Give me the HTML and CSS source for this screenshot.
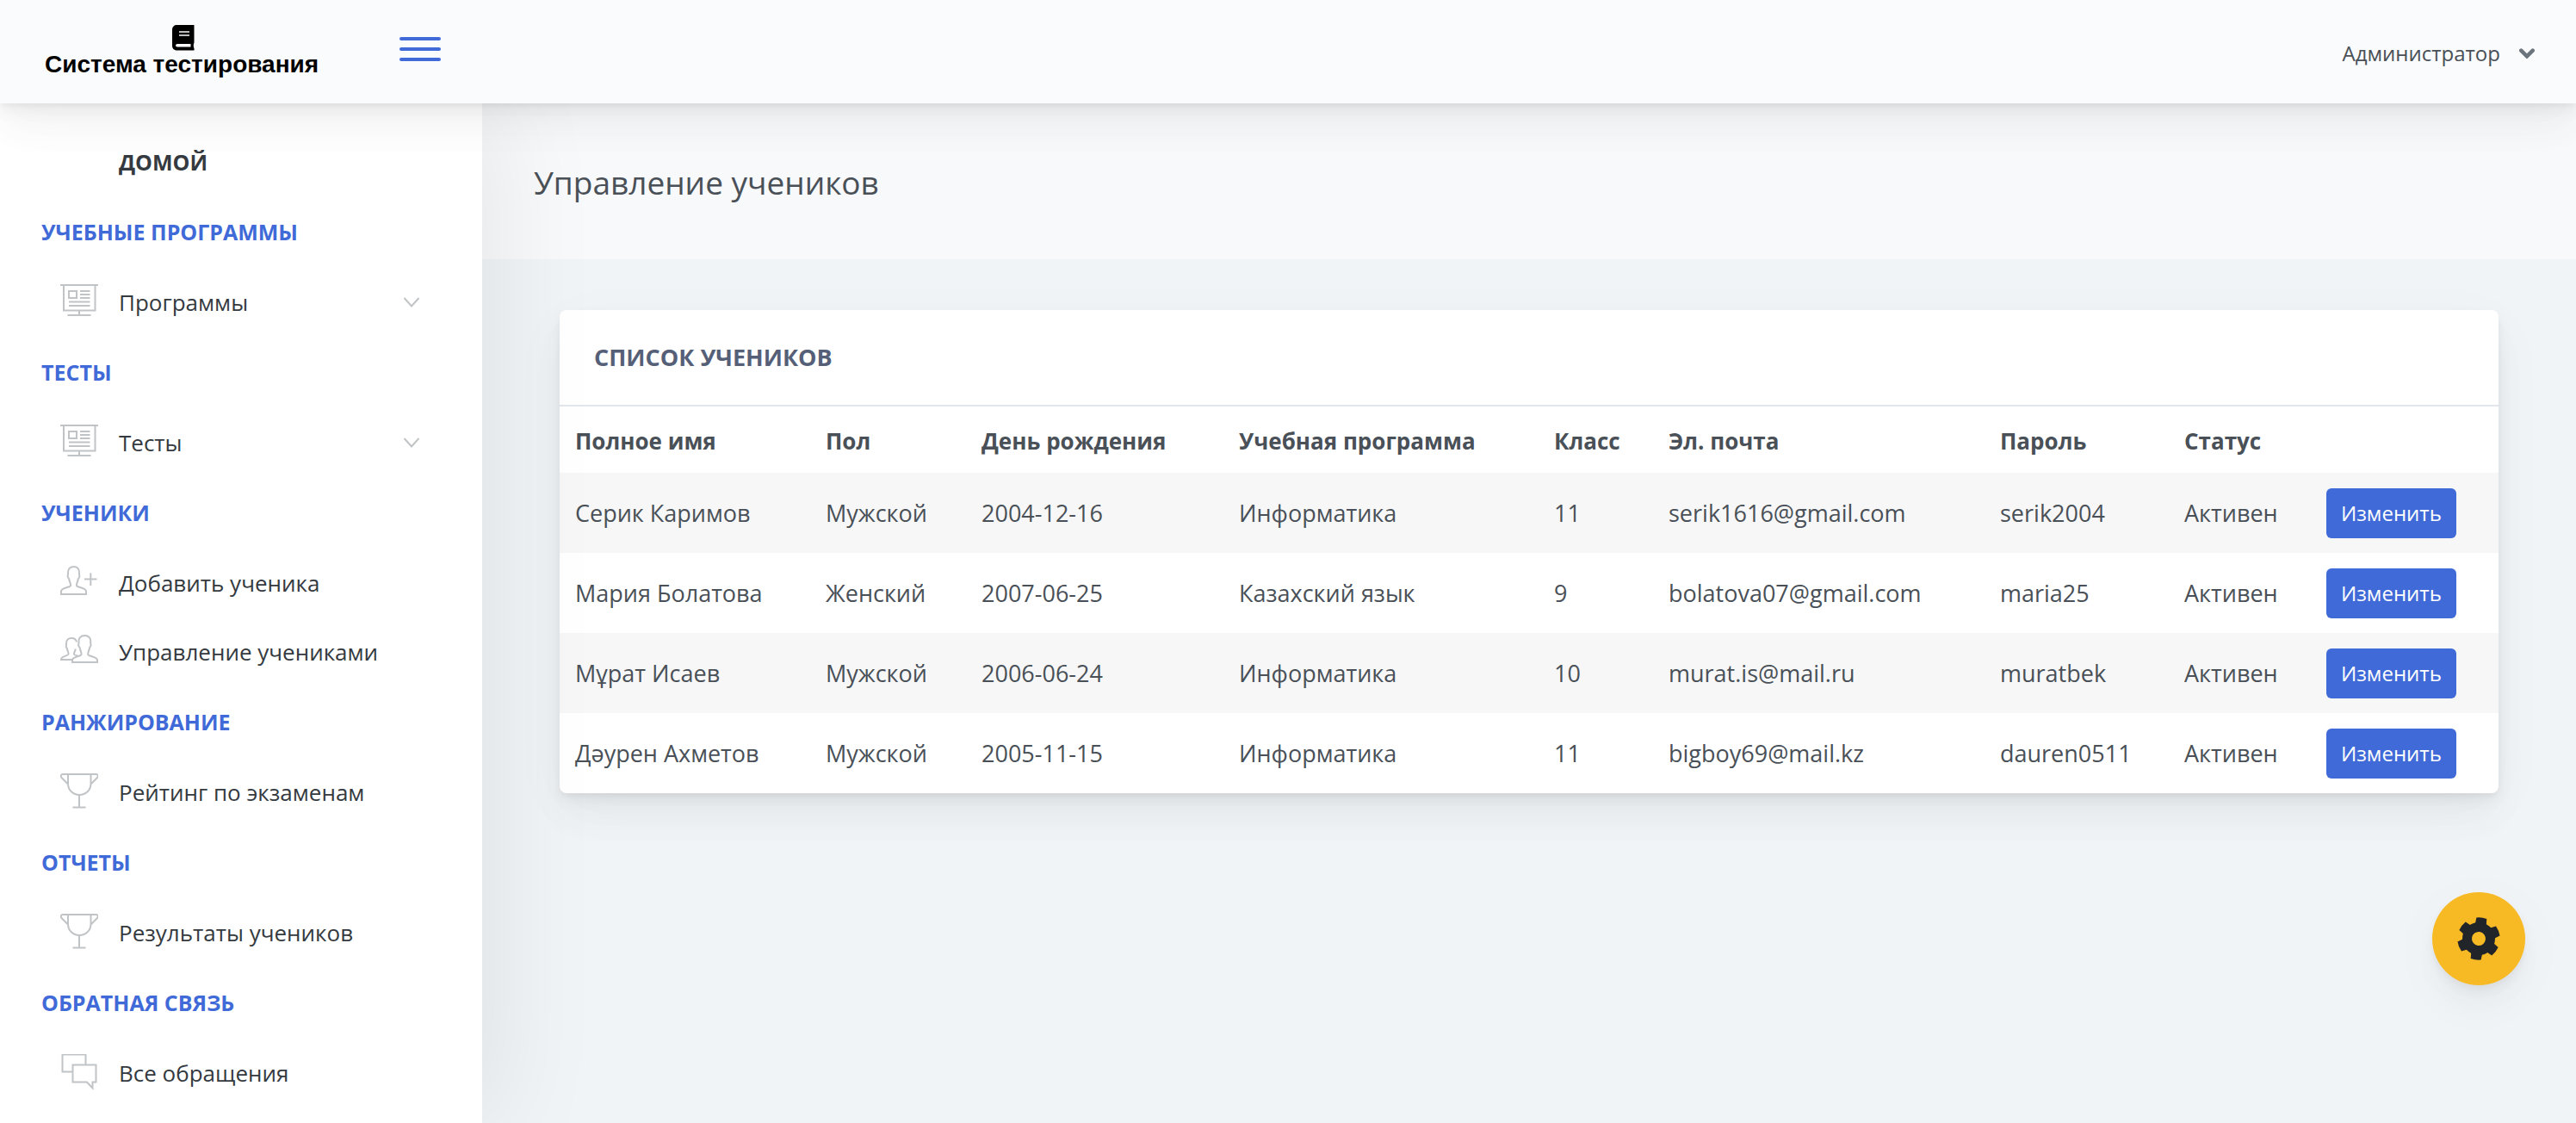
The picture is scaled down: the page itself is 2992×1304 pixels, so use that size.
FILE: index.html
```html
<!DOCTYPE html>
<html lang="ru">
<head>
<meta charset="utf-8">
<meta name="viewport" content="width=device-width, initial-scale=1">
<title>Управление учеников</title>
<link rel="stylesheet" href="styles.css">
</head>
<body>
<svg class="sprite" aria-hidden="true">
  <symbol id="icon-board" viewBox="0 0 44 44"><path d="M0 2h44M4 2v29.500h36.500V2M22 31.500v5.500M8.500 37h27M10 9h9v8h-9zM23 9h11.500M23 13h11.500M23 17h11.500M10 21.500h24.500M10 26h24.500"/></symbol>
  <symbol id="icon-add-user" viewBox="0 0 44 44"><path d="M16 3c-5 0-7.500 3-7 8 .2 1.500-.6 2-.3 3.500.3 1.600 1.300 1.800 1.500 3 .6 3.800 2 4 1.800 7.500-.3 2-11 2.500-11 6.500V35h29v-3.500c0-4-10.700-4.500-11-6.500-.2-3.500 1.200-3.700 1.800-7.500.2-1.200 1.200-1.400 1.500-3 .3-1.500-.5-2-.3-3.500.5-5-2-8-6-8zM28 17.500h14.500M35.300 10.500v14.500"/></symbol>
  <symbol id="icon-users" viewBox="0 0 44 44"><path d="M28.500 3c-5 0-7.500 3-7 8 .2 1.500-.6 2-.3 3.500.3 1.600 1.300 1.800 1.500 3 .6 3.800 2 4 1.800 7.500-.3 2-10.500 2.500-10.500 6.500V34h29v-2.500c0-4-10.500-4.500-10.800-6.500-.2-3.500 1.200-3.700 1.800-7.500.2-1.200 1.200-1.400 1.500-3 .3-1.500-.5-2-.3-3.500.5-5-2-8-6.700-8zM19 10.500C18.500 7.500 16 6 13 6c-4 0-6.500 2.500-6 7 .2 1.300-.5 1.700-.2 3 .2 1.300 1 1.500 1.200 2.500.5 3 1.600 3.300 1.500 6C9.300 26.500 1 27 1 30.500V31h13M17.800 18.500c-.5 3-2 3.500-1.800 6 .1 1 2 1.500 4 2"/></symbol>
  <symbol id="icon-cup" viewBox="0 0 44 44"><path d="M9 1h26.500V12c0 7.500-6 13-13.300 13S9 19.500 9 12zM9 1H3C.5 1 .3 3.500 1.500 5L9 12.500M35.500 1h6c2.500 0 2.700 2.500 1.500 4l-7.500 7.500M22 25v14.500M14.500 39.500h15"/></symbol>
  <symbol id="icon-chat" viewBox="0 0 44 44"><path d="M14.500 20.500h-12V.500h27v12M14.500 12.500H41.500v20h-4v7l-6.500-7H14.500z"/></symbol>
  <symbol id="icon-down" viewBox="0 0 20 14"><path d="M1.500 2l8.500 9.500L18.500 2"/></symbol>
</svg>

<header class="header">
  <a class="logo" href="#">
    <svg class="logo-icon" viewBox="0 0 26 30" aria-hidden="true"><path fill-rule="evenodd" d="M5.500 0H25.500V20.500C24.500 22 24.500 25 25.500 27.500 26 29 25.500 29.500 24.500 29.500H5.500C2 29.500 0 27 0 24V5.500C0 2 2.500 0 5.500 0zM8 7.300V8.700H20V7.300zM8 11.300V12.700H20V11.300zM6 22C3.500 22 3.500 25.500 6 25.500H21.500V22z"/></svg>
    <span>Система тестирования</span>
  </a>
  <button class="burger" type="button" aria-label="Меню"><span></span><span></span><span></span></button>
  <button class="account" type="button">Администратор
    <svg class="account-arrow" viewBox="0 0 16 10" aria-hidden="true"><path d="M2 2l6 6 6-6"/></svg>
  </button>
</header>

<div class="layout">
  <nav class="sidebar">
    <a class="item home" href="#">ДОМОЙ</a>
    <h2 class="heading">УЧЕБНЫЕ ПРОГРАММЫ</h2>
    <a class="item" href="#"><svg class="icon"><use href="#icon-board"/></svg><span>Программы</span><svg class="down"><use href="#icon-down"/></svg></a>
    <h2 class="heading">ТЕСТЫ</h2>
    <a class="item" href="#"><svg class="icon"><use href="#icon-board"/></svg><span>Тесты</span><svg class="down"><use href="#icon-down"/></svg></a>
    <h2 class="heading">УЧЕНИКИ</h2>
    <a class="item" href="#"><svg class="icon"><use href="#icon-add-user"/></svg><span>Добавить ученика</span></a>
    <a class="item" href="#"><svg class="icon"><use href="#icon-users"/></svg><span>Управление учениками</span></a>
    <h2 class="heading">РАНЖИРОВАНИЕ</h2>
    <a class="item" href="#"><svg class="icon"><use href="#icon-cup"/></svg><span>Рейтинг по экзаменам</span></a>
    <h2 class="heading">ОТЧЕТЫ</h2>
    <a class="item" href="#"><svg class="icon"><use href="#icon-cup"/></svg><span>Результаты учеников</span></a>
    <h2 class="heading">ОБРАТНАЯ СВЯЗЬ</h2>
    <a class="item" href="#"><svg class="icon"><use href="#icon-chat"/></svg><span>Все обращения</span></a>
  </nav>

  <main class="main">
    <div class="title-bar"><h1>Управление учеников</h1></div>
    <section class="card">
      <h2 class="card-title">СПИСОК УЧЕНИКОВ</h2>
      <table class="students">
        <colgroup>
          <col class="c-name"><col class="c-sex"><col class="c-birth"><col class="c-course"><col class="c-grade"><col class="c-mail"><col class="c-pass"><col class="c-status"><col class="c-action">
        </colgroup>
        <thead>
          <tr><th>Полное имя</th><th>Пол</th><th>День рождения</th><th>Учебная программа</th><th>Класс</th><th>Эл. почта</th><th>Пароль</th><th>Статус</th><td></td></tr>
        </thead>
        <tbody>
          <tr><td>Серик Каримов</td><td>Мужской</td><td>2004-12-16</td><td>Информатика</td><td>11</td><td>serik1616@gmail.com</td><td>serik2004</td><td>Активен</td><td><button class="edit" type="button">Изменить</button></td></tr>
          <tr><td>Мария Болатова</td><td>Женский</td><td>2007-06-25</td><td>Казахский язык</td><td>9</td><td>bolatova07@gmail.com</td><td>maria25</td><td>Активен</td><td><button class="edit" type="button">Изменить</button></td></tr>
          <tr><td>Мұрат Исаев</td><td>Мужской</td><td>2006-06-24</td><td>Информатика</td><td>10</td><td>murat.is@mail.ru</td><td>muratbek</td><td>Активен</td><td><button class="edit" type="button">Изменить</button></td></tr>
          <tr><td>Дәурен Ахметов</td><td>Мужской</td><td>2005-11-15</td><td>Информатика</td><td>11</td><td>bigboy69@mail.kz</td><td>dauren0511</td><td>Активен</td><td><button class="edit" type="button">Изменить</button></td></tr>
        </tbody>
      </table>
    </section>
  </main>
</div>

<button class="settings" type="button" aria-label="Настройки">
  <svg viewBox="-25 -25 50 50" aria-hidden="true">
    <g transform="rotate(8)">
      <circle r="13.500" fill="none" stroke="currentColor" stroke-width="11"/>
      <path id="tooth" d="M-6.500-17L-6-24Q0-25.500 6-24L6.500-17z"/>
      <use href="#tooth" transform="rotate(60)"/><use href="#tooth" transform="rotate(120)"/><use href="#tooth" transform="rotate(180)"/><use href="#tooth" transform="rotate(240)"/><use href="#tooth" transform="rotate(300)"/>
    </g>
  </svg>
</button>
</body>
</html>
```

FILE: styles.css
```css
* { box-sizing: border-box; }

:root {
  --blue: #3f6ad8;
  --shadow: 0 15px 70px rgba(4, 9, 20, .03), 0 30px 45px rgba(4, 9, 20, .03), 0 8px 17px rgba(4, 9, 20, .05), 0 4px 6px rgba(4, 9, 20, .03);
}

body {
  margin: 0;
  min-height: 100vh;
  display: flex;
  flex-direction: column;
  background: #f1f4f6;
  color: #495057;
  font-family: "Open Sans", "Noto Sans", sans-serif;
  font-size: 26px;
  line-height: 42px;
}

h1, h2 { margin: 0; font-size: inherit; }
a { color: inherit; text-decoration: none; }
button { border: 0; font-family: inherit; cursor: pointer; }
.sprite { display: none; }

/* Header */
.header {
  position: relative;
  z-index: 10;
  height: 120px;
  display: flex;
  align-items: center;
  background: #fafbfc;
  box-shadow: var(--shadow);
}
.logo {
  width: 464px;
  padding-left: 52px;
  display: flex;
  flex-direction: column;
  align-items: flex-start;
  color: #000;
  font: bold 28px/32px "Liberation Sans", Arial, sans-serif;
}
.logo-icon { width: 26px; height: 30px; margin-left: 148px; }
.burger {
  width: 48px;
  padding: 0 0 6px;
  display: flex;
  flex-direction: column;
  gap: 8px;
  background: none;
}
.burger span { height: 4px; border-radius: 2px; background: var(--blue); }
.account {
  margin-left: auto;
  padding: 4px 48px 0 0;
  display: flex;
  align-items: center;
  gap: 22px;
  background: none;
  color: #495057;
  font-size: 24px;
  line-height: 40px;
}
.account-arrow { width: 18px; height: 12px; fill: none; stroke: #6c757d; stroke-width: 4; stroke-linecap: round; }

/* Layout */
.layout { flex: 1; display: flex; }
.sidebar {
  position: relative;
  z-index: 5;
  width: 560px;
  flex: none;
  padding-top: 28px;
  background: #fff;
  box-shadow: 14px 0 120px rgba(0, 0, 0, .08);
}
.heading {
  height: 83px;
  padding-left: 48px;
  color: var(--blue);
  font-size: 25px;
  font-weight: 700;
  line-height: 82px;
}
.item {
  height: 80px;
  padding: 0 72px 0 70px;
  display: flex;
  align-items: center;
  color: #343a40;
  line-height: 80px;
}
.home { padding-left: 138px; font-size: 25px; font-weight: 700; }
.icon {
  width: 44px;
  height: 44px;
  margin-right: 24px;
  fill: none;
  stroke: #c1c4c6;
  stroke-width: 2;
  overflow: visible;
}
.down { width: 20px; height: 14px; margin-left: auto; fill: none; stroke: #c1c4c6; stroke-width: 2; }

/* Content */
.main { flex: 1; min-width: 0; }
.title-bar { height: 181px; padding: 64px 60px; background: #f8f9fb; }
.title-bar h1 { font-size: 37px; font-weight: 400; line-height: 56px; }
.card {
  margin: 59px 90px;
  overflow: hidden;
  border-radius: 8px;
  background: #fff;
  box-shadow: var(--shadow);
}
.card-title {
  height: 112px;
  padding: 0 40px;
  border-bottom: 2px solid #e3e7ec;
  color: #565f78;
  font-size: 27px;
  font-weight: 700;
  line-height: 110px;
}
.students { width: 100%; border-collapse: collapse; table-layout: fixed; font-size: 27px; }
.students th, .students td { padding: 0 18px; text-align: left; white-space: nowrap; }
.students th { height: 77px; padding-top: 2px; font-size: 26px; font-weight: 700; }
.students tbody td { height: 93px; }
.students tbody tr:nth-child(odd) { background: #f7f7f7; }
.c-name { width: 291px; }
.c-sex { width: 181px; }
.c-birth { width: 299px; }
.c-course { width: 366px; }
.c-grade { width: 133px; }
.c-mail { width: 385px; }
.c-pass { width: 214px; }
.c-status { width: 165px; }
.edit {
  height: 58px;
  padding: 0 17px;
  display: block;
  border-radius: 6px;
  background: var(--blue);
  color: #fff;
  font-size: 24px;
}

/* Floating settings button */
.settings {
  position: fixed;
  right: 59px;
  bottom: 160px;
  z-index: 20;
  width: 108px;
  height: 108px;
  padding: 29px;
  border-radius: 50%;
  background: #f7b924;
  color: #212529;
  box-shadow: var(--shadow);
}
.settings svg { display: block; width: 50px; height: 50px; fill: currentColor; }
```
